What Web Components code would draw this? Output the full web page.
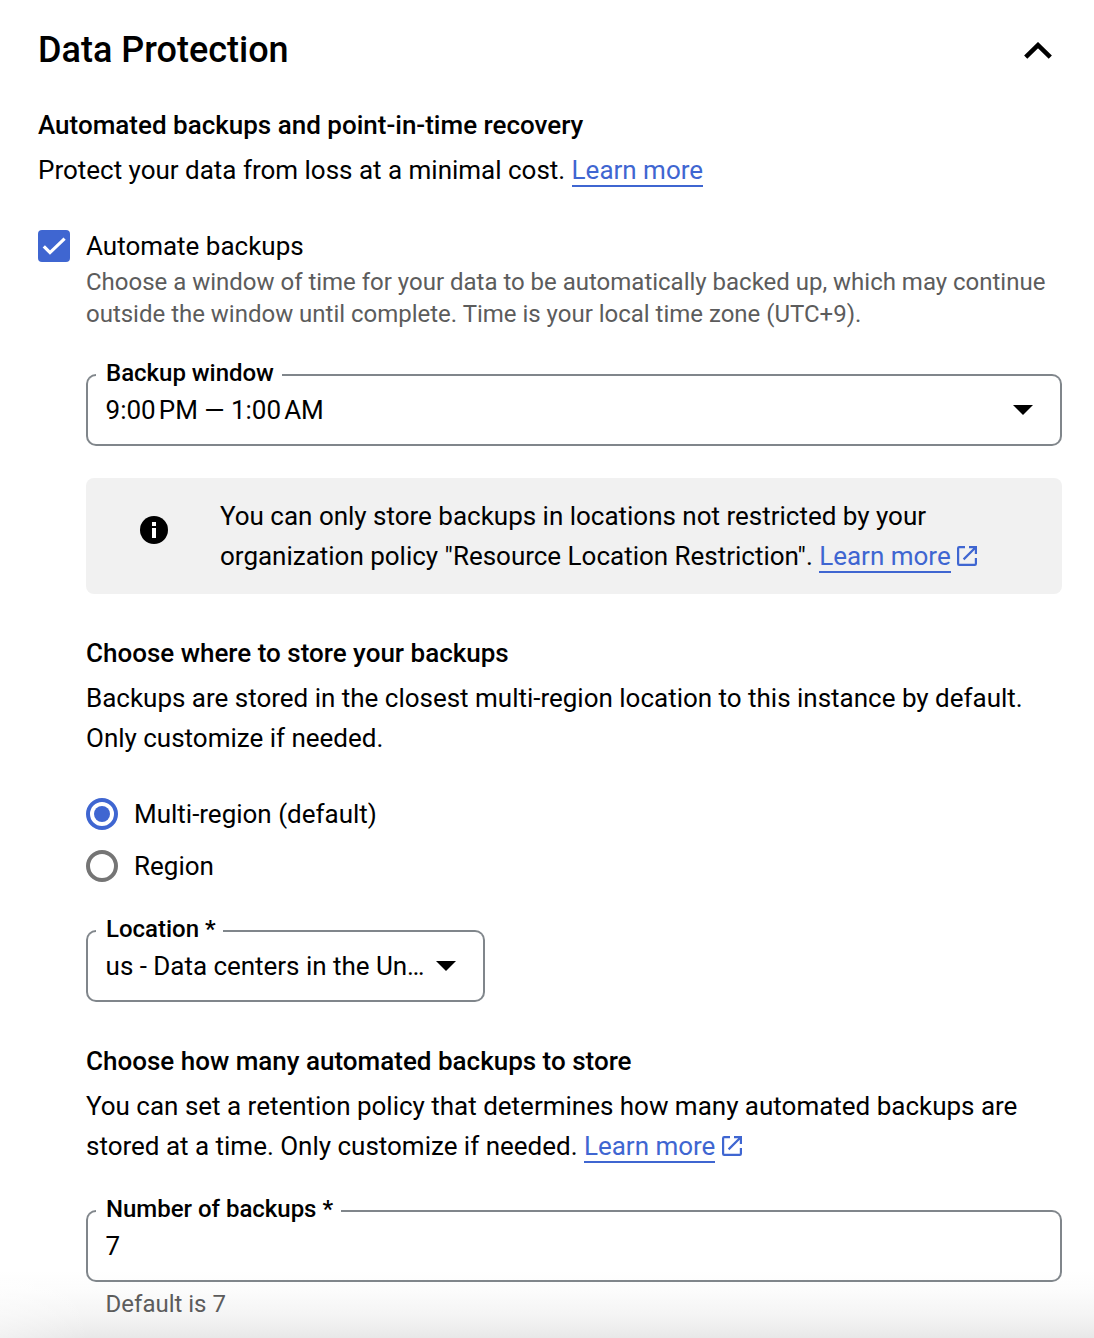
<!DOCTYPE html>
<html lang="en">
<head>
<meta charset="utf-8">
<title>Data Protection</title>
<style>
html,body{margin:0;background:#fff}
body{font:400 26px/40px Roboto,sans-serif;color:#000;--blue:#3f66d1;--line:#80868b;--muted:#5c5c5c;--ls-body:-0.01px;--ls-help:-0.01px;--ls-value:-0.03px;--ls-label:-0.02px}
</style>
</head>
<body>
<data-protection></data-protection>
<script>
const define = (name, html) => customElements.define(name, class extends HTMLElement {
  constructor() {
    super();
    this.attachShadow({ mode: 'open' }).innerHTML = html;
  }
});

define('section-title', `<style>
:host{display:flex;align-items:center;justify-content:space-between;padding-right:10px;height:60px}
h1{margin:0;align-self:flex-start;font-size:36px;font-weight:500;line-height:58px}
svg{display:block}
</style><h1><slot></slot></h1>
<svg width="28" height="18" viewBox="0 0 28 18"><path d="M1.7 15.2 14 3.1 26.3 15.2" fill="none" stroke="#000" stroke-width="4.5"/></svg>`);

define('sub-heading', `<style>
:host{display:block;font-weight:500}
</style><slot></slot>`);

define('body-text', `<style>
:host{display:block;margin-top:5px;letter-spacing:var(--ls-body,0);white-space:nowrap}
</style><slot></slot>`);

define('text-link', `<style>
:host{display:inline;color:var(--blue)}
span{border-bottom:2px solid var(--blue)}
svg{display:none;margin-left:6.5px;vertical-align:-1px}
:host([external]) svg{display:inline-block}
</style><span><slot></slot></span><svg width="20" height="20" viewBox="0 0 20 20" fill="none" stroke="var(--blue)" stroke-width="2.2"><path d="M8 1.1H2.2Q1.1 1.1 1.1 2.2V17.8Q1.1 18.9 2.2 18.9H17.8Q18.9 18.9 18.9 17.8V12M12 1.1H18.9V8M18.5 1.5 6.6 13.4"/></svg>`);

define('check-box', `<style>
:host{display:flex;gap:16px;letter-spacing:var(--ls-body,0)}
.box{width:32px;height:32px;border-radius:4px;background:var(--blue);flex:none}
svg{display:block}
.label{line-height:32px}
.help{font-size:24px;line-height:32px;color:var(--muted);margin-top:4px;letter-spacing:var(--ls-help,0);white-space:nowrap}
</style><div class="box"><svg width="32" height="32" viewBox="0 0 32 32"><path d="M5.8 16.3 12 22.6 26.6 8.7" fill="none" stroke="#fff" stroke-width="3.2"/></svg></div>
<div><div class="label"><slot></slot></div><div class="help"><slot name="help"></slot></div></div>`);

define('outlined-field', `<style>
:host{display:grid;height:72px}
.outline,.value{grid-area:1/1;box-sizing:border-box;height:72px}
.outline{display:flex}
.start,.notch,.end{box-sizing:border-box;border:2px solid var(--line)}
.start{width:10px;border-right:0;border-radius:10px 0 0 10px}
.notch{border-top-color:transparent;border-left:0;border-right:0;padding:0 7.7px 0 10px}
.notch span{display:block;margin-top:-19px;font-size:24px;line-height:32px;font-weight:500;letter-spacing:var(--ls-label,0);white-space:nowrap}
.end{flex:1;border-left:0;border-radius:0 10px 10px 0}
.value{display:flex;align-items:center;justify-content:space-between;padding:0 29px 0 19.6px;letter-spacing:var(--ls-value,0);white-space:pre}
svg{display:none}
:host([select]) svg{display:block}
</style><div class="outline"><div class="start"></div><div class="notch"><span><slot name="label"></slot></span></div><div class="end"></div></div>
<div class="value"><div><slot></slot></div><svg width="20" height="10" viewBox="0 0 20 10"><path d="M0 0H20L10 10Z"/></svg></div>`);

define('info-banner', `<style>
:host{display:flex;background:#f1f1f1;border-radius:8px;padding:18px 0 18px 54px;gap:52px;height:80px;letter-spacing:var(--ls-body,0);white-space:nowrap}
svg{flex:none;margin-top:20px}
</style><svg width="28" height="28" viewBox="0 0 28 28"><circle cx="14" cy="14" r="14"/><path d="M12 6h4v4h-4zM12 12h4v10h-4z" fill="#fff"/></svg><div><slot></slot></div>`);

define('radio-option', `<style>
:host{display:flex;align-items:center;gap:16px;height:32px;letter-spacing:var(--ls-body,0)}
i{box-sizing:border-box;width:32px;height:32px;border:4px solid #757575;border-radius:50%;display:grid;place-items:center}
:host([checked]) i{border-color:var(--blue)}
:host([checked]) i::after{content:"";width:16px;height:16px;border-radius:50%;background:var(--blue)}
</style><i></i><span><slot></slot></span>`);

define('data-protection', `<style>
:host{display:block;box-sizing:border-box;height:1338px;padding:21px 32px 0 38px;overflow:hidden;background:linear-gradient(90deg,rgba(255,255,255,.4),rgba(255,255,255,0) 90px),linear-gradient(#fff 0,#fff 1270px,#fcfcfc 1290px,#f4f4f4 1316px,#e8e8e8 1338px)}
.intro{margin-top:24px}
check-box{margin-top:40px}
.nested{padding-left:48px}
.window{margin-top:44px}
info-banner{margin-top:32px}
.group{margin-top:39px}
.radios{display:flex;flex-direction:column;gap:20px;margin-top:40px}
.location{width:399px;margin-top:48px}
.count{margin-top:44px}
.hint{padding-left:19.6px;margin-top:6px;font-size:24px;line-height:32px;color:var(--muted);letter-spacing:var(--ls-help,0)}
</style>
<section-title>Data Protection</section-title>
<div class="intro"><sub-heading>Automated backups and point-in-time recovery</sub-heading>
<body-text>Protect your data from loss at a minimal cost. <text-link>Learn more</text-link></body-text></div>
<check-box>Automate backups<span slot="help">Choose a window of time for your data to be automatically backed up, which may continue<br>outside the window until complete. Time is your local time zone (UTC+9).</span></check-box>
<div class="nested">
<outlined-field class="window" select><span slot="label">Backup window</span>9:00&#8239;PM — 1:00&#8239;AM</outlined-field>
<info-banner>You can only store backups in locations not restricted by your<br>organization policy "Resource Location Restriction". <text-link external>Learn more</text-link></info-banner>
<div class="group"><sub-heading>Choose where to store your backups</sub-heading>
<body-text>Backups are stored in the closest multi-region location to this instance by default.<br>Only customize if needed.</body-text></div>
<div class="radios"><radio-option checked>Multi-region (default)</radio-option><radio-option>Region</radio-option></div>
<outlined-field class="location" select><span slot="label">Location *</span>us - Data centers in the Un…</outlined-field>
<div class="group"><sub-heading>Choose how many automated backups to store</sub-heading>
<body-text>You can set a retention policy that determines how many automated backups are<br>stored at a time. Only customize if needed. <text-link external>Learn more</text-link></body-text></div>
<outlined-field class="count"><span slot="label">Number of backups *</span>7</outlined-field>
<div class="hint">Default is 7</div>
</div>`);
</script>
</body>
</html>
